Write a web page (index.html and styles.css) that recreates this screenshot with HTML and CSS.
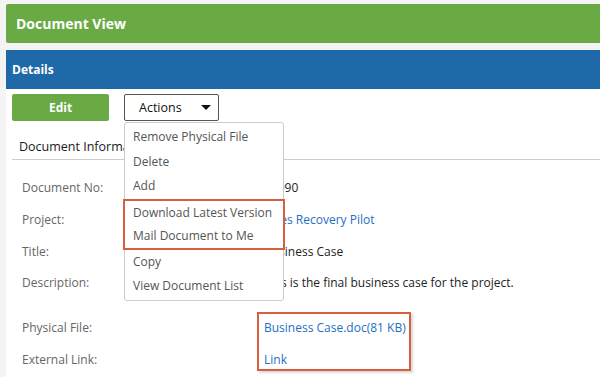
FILE: index.html
```html
<!DOCTYPE html>
<html>
<head>
<meta charset="utf-8">
<link rel="stylesheet" href="styles.css">
</head>
<body>
<div class="page">
  <div class="title-bar">Document View</div>
  <div class="panel">
    <div class="panel-head">Details</div>
    <div class="panel-body">
      <div class="toolbar">
        <button class="btn-edit">Edit</button>
        <div class="actions-wrap">
          <button class="btn-actions">Actions <span class="caret"></span></button>
          <ul class="menu">
            <li>Remove Physical File</li>
            <li>Delete</li>
            <li>Add</li>
            <li class="hl-group">
              <ul>
                <li>Download Latest Version</li>
                <li>Mail Document to Me</li>
              </ul>
            </li>
            <li>Copy</li>
            <li>View Document List</li>
          </ul>
        </div>
      </div>
      <div class="section-title">Document Information</div>
      <div class="info">
        <div class="row"><span class="label">Document No:</span><span class="value">00090</span></div>
        <div class="row"><span class="label">Project:</span><span class="value link">Sales Recovery Pilot</span></div>
        <div class="row"><span class="label">Title:</span><span class="value">Business Case</span></div>
        <div class="row"><span class="label">Description:</span><span class="value">This is the final business case for the project.</span></div>
        <div class="row gap"><span class="label">Physical File:</span><span class="value link">Business Case.doc(81 KB)</span></div>
        <div class="row"><span class="label">External Link:</span><span class="value link">Link</span></div>
        <div class="hl-values"></div>
      </div>
    </div>
  </div>
</div>
</body>
</html>
```
FILE: styles.css
```css
* { box-sizing: border-box; }
body {
  margin: 0;
  background: #f4f4f4;
  font-family: "Open Sans", "Noto Sans", sans-serif;
  font-size: 12px;
  overflow: hidden;
}
.page {
  padding: 4px 0 0 6px;
  height: 377px;
}
.title-bar {
  height: 39px;
  background: #69aa45;
  color: #fff;
  font-weight: 700;
  font-size: 14px;
  display: flex;
  align-items: center;
  padding-left: 10px;
  border-radius: 2px 0 0 2px;
}
.panel {
  margin-top: 7px;
  background: #fff;
  height: 330px;
}
.panel-head {
  height: 39px;
  background: #2069a8;
  color: #fff;
  font-weight: 700;
  font-size: 12px;
  display: flex;
  align-items: center;
  padding-left: 6px;
}
.panel-body {
  padding: 5px 0 0 6px;
}
.toolbar {
  display: flex;
  gap: 15px;
  height: 27px;
}
.btn-edit {
  width: 97px;
  height: 27px;
  background: #69aa45;
  color: #fff;
  border: none;
  border-radius: 2px;
  font-family: inherit;
  font-weight: 700;
  font-size: 12px;
}
.actions-wrap {
  position: relative;
}
.btn-actions {
  width: 95px;
  height: 27px;
  background: #fff;
  border: 1px solid #555;
  border-radius: 2px;
  font-family: inherit;
  font-size: 12.5px;
  color: #111;
  display: flex;
  align-items: center;
  padding: 0 0 0 14px;
}
.caret {
  margin-left: 19px;
  width: 0;
  height: 0;
  border-left: 5px solid transparent;
  border-right: 5px solid transparent;
  border-top: 5px solid #111;
}
.menu {
  position: absolute;
  top: 28px;
  left: 0;
  width: 160px;
  margin: 0;
  padding: 2px 0 1px;
  list-style: none;
  background: #fff;
  border: 1px solid #ccc;
  border-radius: 3px;
  z-index: 5;
}
.menu li {
  height: 24.6px;
  line-height: 24.6px;
  padding-left: 8px;
  color: #555;
  font-size: 12px;
  white-space: nowrap;
}
.menu .hl-group {
  height: auto;
  padding: 0;
  margin: 0 -2px;
}
.menu .hl-group ul {
  list-style: none;
  margin: 0;
  padding: 0;
  border: 2px solid #d4603e;
}
.menu .hl-group ul li {
  padding-left: 8px;
  height: 23.5px;
  line-height: 23.5px;
}
.section-title {
  margin-top: 12px;
  height: 27px;
  border-bottom: 1px solid #ccc;
  font-size: 12.5px;
  color: #1a1a1a;
  padding-left: 7px;
  line-height: 27px;
}
.info {
  position: relative;
  padding: 12px 0 0 10px;
}
.row {
  display: flex;
  height: 31.7px;
  align-items: center;
}
.row.gap {
  margin-top: 13px;
}
.label {
  width: 242px;
  color: #666;
}
.value {
  color: #222;
}
.link {
  color: #1f6fc0;
}
.hl-values {
  position: absolute;
  left: 245px;
  top: 152px;
  width: 154px;
  height: 59px;
  border: 2px solid #d4603e;
  box-shadow: 2px 2px 2px rgba(0,0,0,0.15);
}
```
